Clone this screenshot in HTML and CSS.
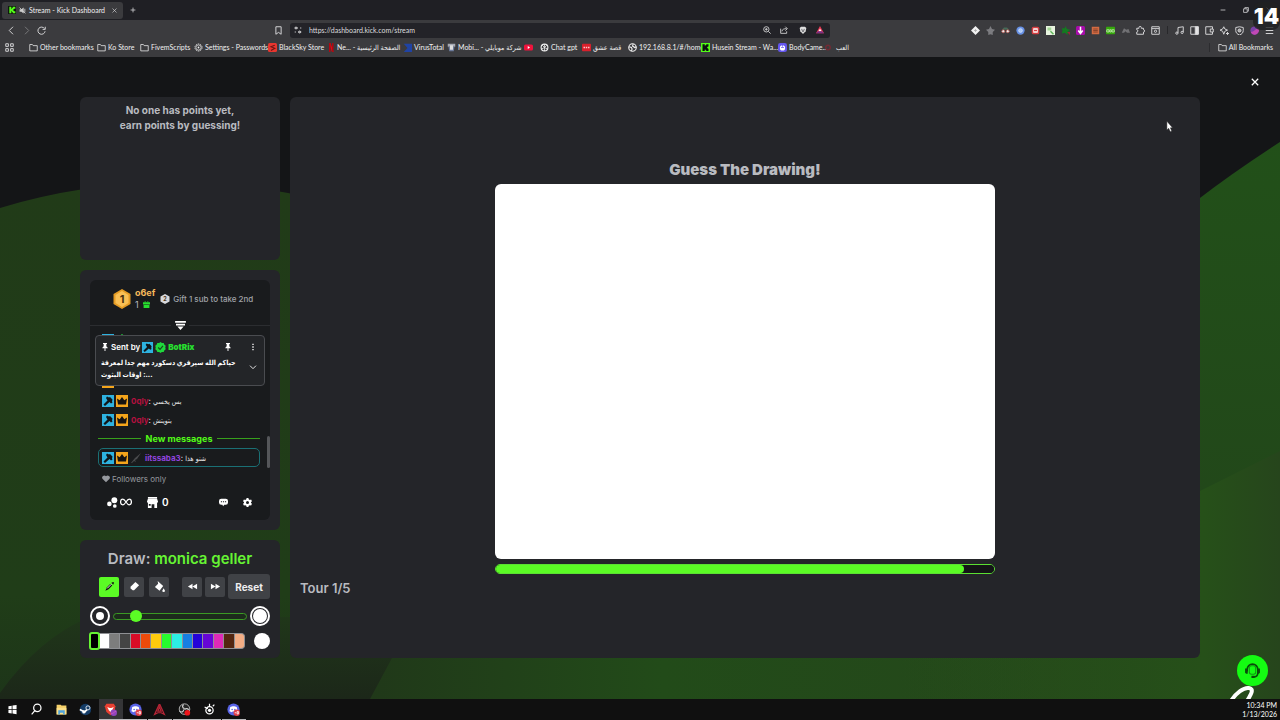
FILE: index.html
```html
<!DOCTYPE html>
<html lang="en">
<head>
    <meta charset="UTF-8">
    <title>Stream - Kick Dashboard</title>
    <link rel="stylesheet" href="styles.css">
</head>
<body>
    <svg class="sprite" aria-hidden="true">
        <symbol id="folder" viewBox="0 0 12 12"><path d="M1 10.500V2h3.500l1 1.500H11v7z" fill="none" stroke="currentColor"/></symbol>
        <symbol id="kick" viewBox="0 0 12 12"><path d="M0 0h12v12H0z" fill="#53fc18"/><path d="M2 1.500h3v2h1v-1h1v-1h3v3H9v1H8v1h1v1h1v3H7v-1H6v-1H5v2H2z" fill="#0b0e0f"/></symbol>
        <symbol id="kick-dark" viewBox="0 0 12 12"><path d="M0 0h12v12H0z" fill="#10160f"/><path d="M2 1h3v3h1V3h1V1h4v3H9v1H8v2h1v1h2v3H7V9H6V8H5v3H2z" fill="#53fc18"/></symbol>
        <symbol id="globe" viewBox="0 0 12 12"><circle cx="6" cy="6" r="5" fill="none" stroke="currentColor" stroke-width="1.500"/><path d="M1.500 5l3 1 1 2-1 2.500M7 1.500L6 4l3 2 2-1" fill="none" stroke="currentColor" stroke-width="1.500"/></symbol>
        <symbol id="knot" viewBox="0 0 12 12"><circle cx="6" cy="6" r="4.500" fill="none" stroke="currentColor" stroke-width="1.500"/><path d="M6 1.500v4.500l4 2M6 6l-4 2M3 3l3 3 3-3M6 6v4.500" fill="none" stroke="currentColor"/></symbol>
        <symbol id="gear" viewBox="0 0 12 12"><path fill-rule="evenodd" fill="currentColor" d="M4.800 0h2.400l.4 1.700 1.500.8L10.800 2 12 4.200 10.700 5.400v1.200L12 7.800 10.800 10l-1.700-.5-1.500.8L7.200 12H4.800l-.4-1.700-1.500-.8L1.200 10 0 7.800l1.300-1.200V5.400L0 4.200 1.200 2l1.700.5 1.500-.8zM6 4a2 2 0 100 4 2 2 0 000-4z"/></symbol>
        <symbol id="gear-line" viewBox="0 0 12 12"><circle cx="6" cy="6" r="4.800" fill="none" stroke="currentColor" stroke-dasharray="2 1"/><circle cx="6" cy="6" r="3.500" fill="none" stroke="currentColor"/><circle cx="6" cy="6" r="1.200" fill="currentColor"/></symbol>
        <symbol id="mod" viewBox="0 0 12 12"><path d="M0 0h12v12H0z" fill="#2eb2e0"/><path d="M5 1.500l2 1 1-.5 2.500 2.500-.5 2 .5 1-1.500 1L7.500 7 3 11 1.500 9.500 5.500 5.500 4 3z" fill="#101619"/></symbol>
        <symbol id="crown" viewBox="0 0 12 12"><path d="M0 0h12v12H0z" fill="#f5a51b"/><path d="M1 3.500l2.700 1.700L6 2l2.300 3.200L11 3.500l-1 6H2z" fill="#171412"/></symbol>
        <symbol id="verified" viewBox="0 0 12 12"><path d="M6 0l1.500 1.200 2-.2.600 1.800 1.600 1.200L11.200 6l.5 2-1.600 1.200-.6 1.800-2-.2L6 12l-1.500-1.200-2 .2-.6-1.800L.3 8 .800 6 .3 4l1.600-1.200L2.500 1l2 .2z" fill="#1fd83c"/><path d="M3.500 6l2 2 3.200-3.800" fill="none" stroke="#174a1d" stroke-width="1.300"/></symbol>
        <symbol id="pin" viewBox="0 0 12 12"><path d="M3 0h6v1.500H8v3.500l2 2v1H6.700v4H5.300V8H2V7l2-2V1.500H3z" fill="currentColor"/></symbol>
        <symbol id="discord" viewBox="0 0 16 16"><circle cx="8" cy="8" r="7.500" fill="#5964e8"/><path d="M4 5l3-1h2l3 1 1 5-3 1.500-.8-1H6.800l-.8 1L3 10z" fill="#fff"/><circle cx="6.300" cy="8" r="1" fill="#5964e8"/><circle cx="9.700" cy="8" r="1" fill="#5964e8"/><circle cx="12" cy="12" r="4" fill="#e2404b"/><path d="M9.500 12h2M12.500 10.500h1.500v3h-1.500z" stroke="#fff" fill="none"/></symbol>
    </svg>

    <header class="browser">
        <div class="tab-strip">
            <div class="tab">
                <svg class="icon"><use href="#kick-dark"/></svg>
                <svg class="icon-small" viewBox="0 0 12 12"><path d="M1 4h3l4-3v10L4 8H1z" fill="#ccc"/><path d="M1 1l10 10M10 3v6" stroke="#ccc" stroke-width="1.500"/></svg>
                <span>Stream - Kick Dashboard</span>
                <button class="tab-close" aria-label="Close tab"><svg viewBox="0 0 10 10"><path d="M1 1l8 8M9 1L1 9"/></svg></button>
            </div>
            <button class="new-tab" aria-label="New tab"><svg viewBox="0 0 10 10"><path d="M5 1v8M1 5h8"/></svg></button>
            <div class="window-buttons">
                <button aria-label="Minimize"><svg viewBox="0 0 10 10"><path d="M1 5h8"/></svg></button>
                <button aria-label="Restore"><svg viewBox="0 0 10 10"><path d="M1 3h6v6H1zM3 3V1h6v6H7"/></svg></button>
                <button aria-label="Close window"><svg viewBox="0 0 10 10"><path d="M1 1l8 8M9 1L1 9"/></svg></button>
            </div>
            <div class="fps">14</div>
        </div>

        <div class="toolbar">
            <div class="nav-buttons">
                <button aria-label="Back"><svg viewBox="0 0 12 12"><path d="M8 1L3 6l5 5"/></svg></button>
                <button class="disabled" aria-label="Forward"><svg viewBox="0 0 12 12"><path d="M4 1l5 5-5 5"/></svg></button>
                <button aria-label="Reload"><svg viewBox="0 0 12 12"><path d="M10 3.500A4.800 4.800 0 1010.800 7M11 1v3.500H7.500"/></svg></button>
            </div>
            <button class="save" aria-label="Bookmark this page"><svg viewBox="0 0 12 12"><path d="M2.500 1h7v10L6 8.500 2.500 11z"/></svg></button>
            <div class="address">
                <svg class="line-icon" viewBox="0 0 12 12"><path d="M1 3h5M9 3h2M1 9h2M6 9h5"/><circle cx="3" cy="3" r="1.500"/><circle cx="8.500" cy="9" r="1.500"/></svg>
                <input type="text" aria-label="Address" value="https://dashboard.kick.com/stream">
                <svg class="line-icon" viewBox="0 0 12 12"><circle cx="5" cy="5" r="4"/><path d="M8 8l3.500 3.500M5 3v4M3 5h4"/></svg>
                <svg class="line-icon share" viewBox="0 0 12 12"><path d="M1 4v7h9V8M3 8c0-3 3-4 7-4M8 1l3 3-3 3"/></svg>
                <svg class="icon" viewBox="0 0 12 12"><path d="M3 1h6l2 2-1 5-4 4-4-4-1-5z" fill="#ddd"/><path d="M3 4l2 1 1 2 1-2 2-1-2 5H5z" fill="#77777c"/></svg>
                <svg class="icon" viewBox="0 0 12 12"><path d="M6 0l6 11H0z" fill="#e93854"/><path d="M6 4l2.500 4h-5z" fill="#fff"/><path d="M0 11l3-3h6l3 3z" fill="#773087"/></svg>
            </div>
            <div class="extensions">
                <svg viewBox="0 0 12 12"><path d="M6 0l6 6-6 6-6-6z" fill="#f2f2f2"/><path d="M4 6h4M6 4v4" stroke="#aaa"/></svg>
                <svg viewBox="0 0 12 12"><path d="M6 0l2 4 4 1-3 3v4l-3-1-3 1V8L0 5l4-1z" fill="#7c7c80"/></svg>
                <svg viewBox="0 0 12 12"><path d="M1 5l3-3h4l3 3z" fill="#476957"/><circle cx="3" cy="7" r="2" fill="#eee" stroke="#b44f48"/><circle cx="9" cy="7" r="2" fill="#eee" stroke="#b44f48"/></svg>
                <svg viewBox="0 0 12 12"><circle cx="6" cy="6" r="5.500" fill="#6791e5"/><circle cx="6" cy="6" r="2.500" fill="#a9c8f6" stroke="#d4e2fa"/></svg>
                <svg viewBox="0 0 12 12"><rect x="1" y="1" width="10" height="10" rx="2" fill="#d63f42"/><path d="M3 3h6v6H3z" fill="#fff"/><path d="M4 5h4v2H4z" fill="#d63f42"/></svg>
                <svg viewBox="0 0 12 12"><path d="M0 0h12v12H0z" fill="#e8f4df"/><path d="M2 2h5v4H2z" fill="#a3d695"/><path d="M6 7l4 4" stroke="#5fb75b" stroke-width="2"/></svg>
                <svg viewBox="0 0 12 12"><path d="M6 0l2 4 4 1-3 3v4L5 9 1 10l1-4-1-3h4z" fill="#137a20"/><path d="M8 8h4v4z" fill="#93283a"/></svg>
                <svg viewBox="0 0 12 12"><rect width="12" height="12" rx="2" fill="#a80cab"/><path d="M6 1v8M3 6l3 4 3-4" fill="none" stroke="#fff" stroke-width="2"/></svg>
                <svg viewBox="0 0 12 12"><path d="M1 1h10v10H1z" fill="#d26b42"/><path d="M3 4h6M3 6h6M3 8h6" stroke="#713725"/></svg>
                <svg viewBox="0 0 12 12"><rect y="1" width="12" height="10" rx="1" fill="#36a80c"/><path d="M1 5h3v3H1zM5 5h2v3H5zM8 5h3v3H8z" fill="none" stroke="#d0eec1"/></svg>
                <svg viewBox="0 0 12 12"><path d="M1 9l3-6 3 2 3-1 2 5H8L6 7 4 9z" fill="#717174"/></svg>
                <svg class="line" viewBox="0 0 12 12"><path d="M1 3h3V2a1.500 1.500 0 013 0v1h3v2a1.500 1.500 0 010 3v3H1V8a1.500 1.500 0 000-3z"/></svg>
                <svg class="line" viewBox="0 0 12 12"><path d="M1 1h10v10H1zM1 3.500h10"/><circle cx="6" cy="7" r="1.500"/></svg>
                <i></i>
                <svg class="line" viewBox="0 0 12 12"><path d="M4 9V2l7-1v7"/><circle cx="2.500" cy="9.500" r="1.500"/><circle cx="9.500" cy="8.500" r="1.500"/></svg>
                <svg class="line" viewBox="0 0 12 12"><path d="M1 1h10v10H1z"/><path d="M7 1h4v10H7z" fill="#e6e6e6"/></svg>
                <svg class="line" viewBox="0 0 12 12"><path d="M10 4V1H1v10h9V8M7 4h4v4H7z"/></svg>
                <svg class="line" viewBox="0 0 12 12"><path d="M5 1l1.500 3L10 5.500 6.500 7 5 11 3.500 7 0 5.500 3.500 4zM10 8v4M8 10h4"/></svg>
                <svg class="line" viewBox="0 0 12 12"><path d="M6 1l5 1v4c0 3-2 5-5 6-3-1-5-3-5-6V2z"/><circle cx="6" cy="6" r="2" fill="#aaa"/></svg>
                <svg viewBox="0 0 12 12"><circle cx="6" cy="6" r="5.500" fill="#7941a8"/><path d="M1 8c5 0 5-4 10-5a5.500 5.500 0 01-5 8.500A5.500 5.500 0 011 8z" fill="#c149b5"/></svg>
                <svg class="line" viewBox="0 0 12 12"><path d="M1 2h10M1 6h10M1 10h10"/></svg>
            </div>
        </div>

        <div class="bookmarks-bar">
            <button class="apps" aria-label="Apps"><svg viewBox="0 0 12 12"><path d="M1 1h3.500v3.500H1zM7.500 1H11v3.500H7.500zM1 7.500h3.500V11H1zM7.500 7.500H11V11H7.500z"/></svg></button>
            <nav class="bookmarks">
                <a href="#"><svg><use href="#folder"/></svg>Other bookmarks</a>
                <a href="#"><svg><use href="#folder"/></svg>Ko Store</a>
                <a href="#"><svg><use href="#folder"/></svg>FivemScripts</a>
                <a href="#"><svg><use href="#gear-line"/></svg>Settings - Passwords</a>
                <a href="#"><svg viewBox="0 0 12 12"><rect width="12" height="12" rx="2" fill="#e8362f"/><path d="M9 3L4 5l5 2-5 3" fill="none" stroke="#6b1715" stroke-width="1.500"/></svg>BlackSky Store</a>
                <a href="#"><svg viewBox="0 0 12 12"><path d="M4 0h2l4 12H8z" fill="#e50914"/><path d="M4 0h2v12H4zM8 0h2v12H8z" fill="#b20710"/></svg>Ne... - الصفحة الرئيسية</a>
                <a href="#"><svg viewBox="0 0 12 12"><path d="M1 1h11v11H1l5-5.500z" fill="#2043a4"/></svg>VirusTotal</a>
                <a href="#"><svg viewBox="0 0 12 12"><path d="M1 1h10v4H1z" fill="#a5a8b2"/><path d="M2 5h8l-1 6H3z" fill="#6c7a9a"/><path d="M4 3h4v6H4z" fill="#ddd"/></svg>Mobi... - شركة موبايلي</a>
                <a href="#" aria-label="YouTube"><svg viewBox="0 0 12 12"><rect y="2" width="12" height="8" rx="2" fill="#f0133c"/><path d="M5 4l3 2-3 2z" fill="#fff"/></svg></a>
                <a href="#"><svg><use href="#knot"/></svg>Chat gpt</a>
                <a href="#"><svg viewBox="0 0 12 12"><rect y="1" width="12" height="10" rx="1" fill="#d8202c"/><path d="M2 6h8" stroke="#ffc7c9" stroke-width="2" stroke-dasharray="2 1"/></svg>قصة عشق</a>
                <a href="#"><svg><use href="#globe"/></svg>192.168.8.1/#/home</a>
                <a href="#"><svg><use href="#kick"/></svg>Husein Stream - Wa...</a>
                <a href="#"><svg viewBox="0 0 12 12"><rect width="12" height="12" rx="3" fill="#6456ee"/><circle cx="6" cy="6.500" r="3.500" fill="#fff"/><path d="M4 6h4M6 2v3" stroke="#6456ee"/></svg>BodyCame...</a>
                <a href="#"><svg viewBox="0 0 12 12"><circle cx="4" cy="6" r="3" fill="none" stroke="#702c35" stroke-width="2"/></svg>العب</a>
            </nav>
            <a class="all-bookmarks" href="#"><svg><use href="#folder"/></svg>All Bookmarks</a>
        </div>
    </header>

    <main class="game">
        <svg class="hills" viewBox="0 0 1280 642" preserveAspectRatio="none" aria-hidden="true">
            <defs>
                <linearGradient id="hillLeft" x1="0" y1="0" x2="0" y2="1"><stop offset="0" stop-color="#213b18"/><stop offset=".8" stop-color="#203d18"/><stop offset="1" stop-color="#1d3519"/></linearGradient>
                <linearGradient id="hillBottom" x1="0" y1="0" x2="1" y2="0"><stop offset="0" stop-color="#203719"/><stop offset=".4" stop-color="#224b19"/><stop offset="1" stop-color="#25471b"/></linearGradient>
                <linearGradient id="hillRight" x1="0" y1="0" x2="0" y2="1"><stop offset="0" stop-color="#225019"/><stop offset="1" stop-color="#22431a"/></linearGradient>
                <linearGradient id="shade" x1="0" y1="0" x2="0" y2="1"><stop offset="0" stop-color="#20371a"/><stop offset="1" stop-color="#1c2719"/></linearGradient>
                <linearGradient id="slope" x1="0" y1="0" x2="1" y2="0"><stop offset="0" stop-color="#265019" stop-opacity="0"/><stop offset=".8" stop-color="#265019"/><stop offset="1" stop-color="#26451c"/></linearGradient>
            </defs>
            <path d="M0 151Q90 124 180 126T320 144V642H0z" fill="url(#hillLeft)"/>
            <path d="M1130 200Q1190 143 1280 85V642H1130z" fill="url(#hillRight)"/>
            <path d="M350 642V560H1130V642z" fill="url(#hillBottom)"/>
            <path d="M900 642V590L1200 434L1280 394V642z" fill="url(#slope)"/>
            <path d="M0 636Q40 580 90 560H414L370 642H0z" fill="url(#shade)"/>
        </svg>

        <aside class="sidebar">
            <section class="panel scores">
                <p>No one has points yet,<br>earn points by guessing!</p>
            </section>

            <section class="panel chat-panel">
                <div class="chat">
                    <div class="leaders">
                        <svg class="medal" viewBox="0 0 20 20"><path d="M10 0l8.500 5v10L10 20l-8.500-5V5z" fill="#e59c24"/><path d="M10 2l6.500 4v8L10 18l-6.500-4V6z" fill="#f9c055"/><text x="10" y="14" text-anchor="middle">1</text></svg>
                        <div class="leader">
                            <strong>o6ef</strong>
                            <span>1 <svg viewBox="0 0 12 12"><path d="M0 2h12v4H0zM1 7h10v5H1z" fill="#27e02f"/><path d="M3 0l3 2 3-2v2H3z" fill="#27e02f"/></svg></span>
                        </div>
                        <svg class="second" viewBox="0 0 20 20"><path d="M10 0l9 5v10l-9 5-9-5V5z" fill="#d7d9dc"/><text x="10" y="14" text-anchor="middle">2</text></svg>
                        <span class="gift">Gift 1 sub to take 2nd</span>
                        <button class="expand" aria-label="Expand leaderboard"><svg viewBox="0 0 12 10"><path d="M0 0h12v2H0zM1 3h10v2H1zM2.500 6h7L6 10z"/></svg></button>
                    </div>

                    <div class="messages">
                        <div class="message"><svg><use href="#mod"/></svg><svg><use href="#verified"/></svg><span><b class="bot">BotRix</b>: <bdi>ارحبوا جميعا</bdi></span></div>
                        <div class="message spacer"><svg><use href="#crown"/></svg></div>
                        <div class="message"><svg><use href="#mod"/></svg><svg><use href="#crown"/></svg><span><b class="red">0qly</b>: <bdi>بس يخسي</bdi></span></div>
                        <div class="message"><svg><use href="#mod"/></svg><svg><use href="#crown"/></svg><span><b class="red">0qly</b>: <bdi>بتويتش</bdi></span></div>
                        <div class="new-messages">New messages</div>
                        <div class="message highlighted"><svg><use href="#mod"/></svg><svg><use href="#crown"/></svg><svg viewBox="0 0 12 12"><path d="M1 11l4-5 6-5-4 6-2 1 1 2-2-1-2 2z" fill="#4a4b4d"/></svg><span><b class="purple">iitssaba3</b>: <bdi>شنو هذا</bdi></span></div>

                        <div class="pinned">
                            <div class="pinned-head">
                                <svg><use href="#pin"/></svg>
                                <span>Sent by</span>
                                <svg class="badge"><use href="#mod"/></svg>
                                <svg class="badge"><use href="#verified"/></svg>
                                <b class="bot">BotRix</b>
                                <button class="unpin" aria-label="Unpin"><svg><use href="#pin"/></svg></button>
                                <button aria-label="More"><svg viewBox="0 0 12 12"><path d="M5 1h2v2H5zM5 5h2v2H5zM5 9h2v2H5z" fill="currentColor"/></svg></button>
                            </div>
                            <div class="pinned-body">
                                <p>حياكم الله سيرفري دسكورد مهم جدا لمعرفة<br>اوقات البثوث <bdo dir="ltr">:...</bdo></p>
                                <button aria-label="Show all"><svg viewBox="0 0 12 12"><path d="M1.500 4L6 8.500 10.500 4" fill="none" stroke="currentColor" stroke-width="1.300"/></svg></button>
                            </div>
                        </div>
                    </div>

                    <div class="followers"><svg viewBox="0 0 12 12"><path d="M6 11L1 6a3 3 0 015-4 3 3 0 015 4z" fill="currentColor"/></svg>Followers only</div>
                    <div class="chat-actions">
                        <svg viewBox="0 0 12 12"><circle cx="8" cy="3.500" r="3.200"/><circle cx="2.600" cy="7.500" r="2.500"/><circle cx="8.500" cy="9.800" r="2"/></svg>
                        <span class="infinity"><svg viewBox="0 0 14 10"><path d="M7 5C5 2 4 1.500 3 1.500a2.800 3.500 0 000 7C4 8.500 5 8 7 5s3-3.500 4-3.500a2.800 3.500 0 010 7C10 8.500 9 8 7 5z"/></svg></span>
                        <svg viewBox="0 0 12 12"><path d="M1 0h10v1.500H1zM1 2h10l1 3v1h-1v6H8V8H5v4H1V6H0V5zM2 7.500v2h2v-2z" fill-rule="evenodd"/></svg>
                        <span class="points">0</span>
                        <button aria-label="Chat"><svg viewBox="0 0 12 12"><path fill-rule="evenodd" d="M3 1h6a3 3 0 013 3v2a3 3 0 01-3 3H7l-1.500 2L4.500 9H3a3 3 0 01-3-3V4a3 3 0 013-3zM2.500 4.300v1.400H4V4.300zm2.700 0v1.400h1.600V4.300zm2.800 0v1.400h1.500V4.300z"/></svg></button>
                        <button aria-label="Chat settings"><svg><use href="#gear"/></svg></button>
                    </div>
                </div>
            </section>

            <section class="panel draw">
                <h2>Draw: <span>monica geller</span></h2>
                <div class="tools">
                    <button class="tool active" aria-label="Pencil"><svg viewBox="0 0 12 12"><path d="M1.500 10.500L3 7l4-4 2 2-4 4z" fill="#111"/><path d="M8 2l2-1 1 1-1 2z" fill="#111"/><path d="M3.500 8L8 3.500" stroke="#fff"/></svg></button>
                    <button class="tool" aria-label="Eraser"><svg viewBox="0 0 12 12"><path d="M2 6l5-5 4 3.500L5.500 10H4L1.500 8z"/></svg></button>
                    <button class="tool fill" aria-label="Fill"><svg viewBox="0 0 12 12"><path d="M4 0l6 5.500-4 5L1 6.500 4.500 3zM10.500 8L12 10.500a1.500 1.500 0 01-3 0z"/></svg></button>
                    <button class="tool" aria-label="Undo"><svg viewBox="0 0 12 12"><path d="M6 3v6L1 6zM11 3v6L6 6z"/></svg></button>
                    <button class="tool" aria-label="Redo"><svg viewBox="0 0 12 12"><path d="M1 3v6l5-3zM6 3v6l5-3z"/></svg></button>
                    <button class="reset">Reset</button>
                </div>
                <div class="brush">
                    <span class="size small"></span>
                    <input type="range" aria-label="Brush size" min="0" max="100" value="13">
                    <span class="size"></span>
                </div>
                <div class="colors">
                    <div class="palette">
                        <button class="black" aria-label="Black"></button>
                        <button class="white" aria-label="White"></button>
                        <button class="gray" aria-label="Gray"></button>
                        <button class="dark-gray" aria-label="Dark gray"></button>
                        <button class="crimson" aria-label="Red"></button>
                        <button class="orange" aria-label="Orange"></button>
                        <button class="yellow" aria-label="Yellow"></button>
                        <button class="green" aria-label="Green"></button>
                        <button class="cyan" aria-label="Cyan"></button>
                        <button class="blue" aria-label="Blue"></button>
                        <button class="navy" aria-label="Dark blue"></button>
                        <button class="violet" aria-label="Violet"></button>
                        <button class="pink" aria-label="Pink"></button>
                        <button class="brown" aria-label="Brown"></button>
                        <button class="peach" aria-label="Peach"></button>
                    </div>
                    <button class="picker" aria-label="Custom color"></button>
                </div>
            </section>
        </aside>

        <section class="panel board">
            <h1>Guess The Drawing!</h1>
            <canvas width="500" height="375"></canvas>
            <progress value="94" max="100" aria-label="Time left"></progress>
            <div class="tour">Tour 1/5</div>
        </section>

        <button class="close-game" aria-label="Close"><svg viewBox="0 0 10 10"><path d="M1 1l8 8M9 1L1 9"/></svg></button>
        <svg class="cursor" viewBox="0 0 8 12"><path d="M1 0v10l2-2 2 4 1.500-1L5 7.500h2.500z" fill="#fff" stroke="#222" stroke-width=".5"/></svg>
        <svg class="doodle" viewBox="0 0 26 14"><path d="M2 16C7 8 15 2 20 3c6 1 1 8-2 13" fill="none" stroke="#fff" stroke-width="4"/></svg>
        <button class="support" aria-label="Support"><svg viewBox="0 0 16 16"><path d="M3 9V7a5 5 0 0110 0v3c0 3-2 4-4 4" fill="none" stroke="#0a4a0a" stroke-width="1.500"/><path d="M1 6h2.500v5H2L1 10zM12.500 6H15v4l-1 1h-1.500zM7 13h3v2H7z" fill="#0a4a0a"/><rect x="5" y="3.500" width="6" height="8" rx="2" fill="none" stroke="#0c9a10"/></svg></button>
    </main>

    <footer class="taskbar">
        <nav>
            <button aria-label="Start"><svg viewBox="0 0 16 16"><path d="M3 4l4-.6v4.300H3zM8 3.200L13 2.500v5.200H8zM3 8.500h4v4.300L3 12.200zM8 8.500h5v5.200L8 13z" fill="#fff"/></svg></button>
            <button aria-label="Search"><svg viewBox="0 0 16 16"><circle cx="9" cy="6" r="4.500" fill="none" stroke="#fff" stroke-width="1.500"/><path d="M6 9.500L2 14" stroke="#fff" stroke-width="1.500"/></svg></button>
            <button aria-label="Files"><svg viewBox="0 0 16 16"><path d="M2 2h5l1 1h6v11H2z" fill="#f4cf68"/><path d="M2 6h12v8H2z" fill="#fbe08a"/><path d="M4 9h8v5h-2v-2H6v2H4z" fill="#4fa3dd"/></svg></button>
            <button aria-label="Steam"><svg viewBox="0 0 16 16"><circle cx="8" cy="8" r="7" fill="#143c66"/><path d="M1 8l6 3 4-4" stroke="#fff" stroke-width="2" fill="none"/><circle cx="11" cy="6" r="2.500" fill="#143c66" stroke="#fff"/><circle cx="6" cy="11" r="2" fill="#fff"/></svg></button>
            <button class="open current" aria-label="Brave"><svg viewBox="0 0 16 16"><path d="M3 1h9l2 3-1 7-5 4-5-4-2-7z" fill="#ea4032"/><path d="M4 5l3 1h2l3-1-2 4-2 2-2-2z" fill="#fff"/><circle cx="12" cy="12" r="4" fill="#9045be"/><path d="M9 13c3 0 3-2 6-3" stroke="#d55ac2" fill="none"/></svg></button>
            <button class="open" aria-label="Discord"><svg><use href="#discord"/></svg></button>
            <button class="open" aria-label="Launcher"><svg viewBox="0 0 16 16"><path d="M2 14L7.500 2h1L14 14l-4-2H6zM8 5l-2 5h4z" fill="none" stroke="#b72536" stroke-width="1.500"/></svg></button>
            <button class="open" aria-label="OBS"><svg viewBox="0 0 16 16"><circle cx="8" cy="7.500" r="6.500" fill="#222" stroke="#ccc"/><path d="M8 7c-3-1-3-4-1-5M8 8c2-2 5-1 5 1M7 8c0 3-3 4-5 2" stroke="#ccc" stroke-width="1.500" fill="none"/><circle cx="11.500" cy="12" r="3.500" fill="#ee151b"/></svg></button>
            <button class="open" aria-label="SteelSeries"><svg viewBox="0 0 16 16"><circle cx="8" cy="9" r="4.500" fill="none" stroke="#fff" stroke-width="1.500"/><circle cx="8" cy="9" r="2" fill="#fff"/><path d="M2 5l4 2M8 1v4M12 4l2-2" stroke="#fff" stroke-width="1.500"/></svg></button>
            <button class="open" aria-label="Discord"><svg><use href="#discord"/></svg></button>
        </nav>
        <div class="clock">10:34 PM<br>1/13/2026</div>
    </footer>
</body>
</html>
```

FILE: styles.css
```css
* {
    box-sizing: border-box;
}
body {
    margin: 0;
    min-height: 100vh;
    display: flex;
    flex-direction: column;
    background: #141517;
    color: #fff;
    font-family: Inter, "DejaVu Sans Condensed", "DejaVu Sans", sans-serif;
}
h1, h2, p {
    margin: 0;
}
button {
    display: flex;
    align-items: center;
    justify-content: center;
    padding: 0;
    border: none;
    background: none;
    color: inherit;
    font-family: inherit;
    cursor: pointer;
}
svg {
    display: block;
    flex-shrink: 0;
}
.sprite {
    position: absolute;
    width: 0;
    height: 0;
}

/* browser */
.browser {
    background: #3b3b3e;
    font-family: Lato, "DejaVu Sans Condensed", "DejaVu Sans", sans-serif;
    font-size: 7px;
    color: #f0f0f0;
}
.browser button svg, .line-icon, .extensions .line {
    fill: none;
    stroke: #d5d5d7;
    stroke-width: 1.3;
}
.tab-strip {
    position: relative;
    display: flex;
    align-items: center;
    height: 20px;
    background: #1f1f24;
}
.tab {
    display: flex;
    align-items: center;
    gap: 3px;
    width: 121px;
    height: 17px;
    margin-left: 2px;
    padding: 0 6px;
    border-radius: 3px;
    background: #3b3b3e;
    white-space: nowrap;
}
.icon {
    width: 8px;
    height: 8px;
}
.icon-small {
    width: 7px;
    height: 7px;
}
.tab-close {
    margin-left: auto;
}
.tab-close svg {
    width: 5px;
    height: 5px;
}
.new-tab {
    width: 20px;
}
.new-tab svg {
    width: 6px;
    height: 6px;
}
.window-buttons {
    display: flex;
    margin-left: auto;
}
.window-buttons button {
    width: 23px;
}
.window-buttons svg {
    width: 6px;
    height: 6px;
}
.fps {
    position: absolute;
    top: 2px;
    right: 0;
    z-index: 1;
    width: 27px;
    border-radius: 8px;
    background: #202022cc;
    color: #fff;
    font-family: Inter, sans-serif;
    font-size: 22px;
    font-weight: 900;
    line-height: 28px;
    text-align: center;
}
.toolbar {
    display: flex;
    align-items: center;
    height: 20px;
}
.nav-buttons {
    display: flex;
    width: 270px;
    padding-left: 4px;
}
.nav-buttons button {
    width: 15px;
}
.nav-buttons svg, .save svg {
    width: 9px;
    height: 9px;
}
.nav-buttons .disabled {
    opacity: .4;
}
.save {
    width: 17px;
}
.address {
    display: flex;
    align-items: center;
    flex: 1;
    gap: 9px;
    height: 15px;
    margin: 0 141px 0 3px;
    padding: 0 6px 0 4px;
    border-radius: 3px;
    background: #232328;
}
.address input {
    flex: 1;
    min-width: 0;
    padding: 0;
    margin-left: -2px;
    border: none;
    background: none;
    color: #dcdcde;
    font-family: inherit;
    font-size: 7px;
}
.line-icon {
    width: 8px;
    height: 8px;
}
.share {
    margin-right: 2px;
}
.extensions {
    display: flex;
    align-items: center;
    gap: 6px;
    padding-right: 6px;
}
.extensions svg {
    width: 9px;
    height: 9px;
}
.extensions i {
    width: 1px;
    height: 8px;
    margin: 0 1px;
    background: #28282b;
}
.bookmarks-bar {
    display: flex;
    align-items: center;
    height: 17px;
    padding: 0 7px 3px 5px;
}
.apps {
    width: 24px;
    justify-content: flex-start;
}
.bookmarks-bar svg {
    width: 9px;
    height: 9px;
}
.bookmarks {
    display: grid;
    grid-template-columns: 68px 43px 54px 74px 58px 77px 44px 77px 16px 42px 46px 73px 77px 47px auto;
}
.bookmarks-bar a {
    display: flex;
    align-items: center;
    gap: 2px;
    color: inherit;
    text-decoration: none;
    white-space: nowrap;
}
.bookmarks-bar .all-bookmarks {
    margin-left: auto;
    padding-left: 8px;
    border-left: 1px solid #2c2c2f;
}

/* game */
.game {
    position: relative;
    flex: 1;
    display: flex;
    gap: 10px;
    padding: 40px 80px 41px;
    overflow: hidden;
}
.hills {
    position: absolute;
    top: 0;
    left: 0;
    width: 100%;
    height: 100%;
}
.panel {
    position: relative;
    border-radius: 6px;
    background: #242529;
    color: #b9bbc0;
}
.sidebar {
    display: flex;
    flex-direction: column;
    gap: 10px;
    width: 200px;
    flex-shrink: 0;
}
.scores {
    flex: 1;
    min-height: 160px;
    padding-top: 6px;
    font-size: 10px;
    font-weight: 700;
    line-height: 15px;
    text-align: center;
}
.chat-panel {
    padding: 10px;
}
.chat {
    display: flex;
    flex-direction: column;
    height: 240px;
    border-radius: 6px;
    background: #191b1d;
    font-size: 8px;
}
.leaders {
    position: relative;
    display: flex;
    align-items: center;
    gap: 3px;
    height: 46px;
    padding: 0 22px 8px;
    border-bottom: 1px solid #2b2d30;
    white-space: nowrap;
}
.leaders text {
    fill: #4c3310;
    font-size: 11px;
    font-weight: 700;
}
.medal {
    width: 20px;
    height: 20px;
}
.leader {
    margin-right: 2px;
    font-size: 9px;
    line-height: 12px;
}
.leader strong {
    display: block;
    color: #f5b95c;
}
.leader span {
    display: flex;
    align-items: center;
    gap: 4px;
}
.leader svg {
    width: 7px;
    height: 7px;
}
.second {
    width: 10px;
    height: 10px;
}
.gift {
    font-weight: 500;
    color: #a0a3a8;
}
.expand {
    position: absolute;
    left: 50%;
    bottom: -6px;
    width: 18px;
    height: 12px;
    margin-left: -9px;
    background: #191b1d;
}
.expand svg {
    width: 11px;
    height: 9px;
    fill: #fff;
}
.messages {
    position: relative;
    height: 143px;
    padding: 4px 10px 0 8px;
}
.messages::after {
    content: "";
    position: absolute;
    right: 0;
    bottom: 1px;
    width: 3px;
    height: 32px;
    border-radius: 2px;
    background: #55575a;
}
.message {
    display: flex;
    align-items: center;
    gap: 2px;
    height: 19px;
    padding-left: 4px;
    color: #eee;
}
.message svg, .badge {
    width: 12px;
    height: 12px;
}
.message span {
    margin-left: 1px;
    white-space: nowrap;
}
.message bdi {
    font-size: 7px;
}
.message.spacer {
    margin-top: 23px;
}
.message .red {
    color: #b5103f;
}
.message .purple {
    color: #9043df;
}
.message.highlighted {
    padding-left: 3px;
    border: 1px solid #1a7075;
    border-radius: 5px;
}
.message .bot, .bot {
    color: #27e02f;
}
.new-messages {
    display: flex;
    align-items: center;
    gap: 5px;
    height: 19px;
    color: #53fc18;
    font-size: 9px;
    font-weight: 700;
    white-space: nowrap;
}
.new-messages::before, .new-messages::after {
    content: "";
    flex: 1;
    height: 1px;
    background: #37a01c;
}
.pinned {
    position: absolute;
    top: 9px;
    left: 5px;
    right: 5px;
    height: 51px;
    padding: 5px 7px;
    border: 1px solid #4a4c50;
    border-radius: 4px;
    background: #232528;
    color: #fff;
    font-weight: 600;
}
.pinned-head {
    display: flex;
    align-items: center;
    gap: 2px;
    height: 12px;
    margin-left: -2px;
}
.pinned svg {
    width: 8px;
    height: 8px;
}
.pinned .badge {
    width: 11px;
    height: 11px;
}
.unpin {
    margin-left: auto;
    margin-right: 15px;
}
.pinned-body {
    display: flex;
    align-items: center;
    justify-content: space-between;
    margin-left: -2px;
}
.pinned-body p {
    padding-top: 4px;
    font-size: 7px;
    font-weight: 700;
    line-height: 12px;
    white-space: nowrap;
}
.followers {
    display: flex;
    align-items: center;
    gap: 2px;
    height: 20px;
    padding-left: 12px;
    color: #96999e;
}
.followers svg {
    width: 8px;
    height: 8px;
}
.chat-actions {
    display: flex;
    align-items: center;
    height: 26px;
    padding: 0 18px 0 17px;
    color: #fff;
    font-size: 10px;
    font-weight: 600;
}
.chat-actions svg {
    width: 11px;
    height: 11px;
    fill: #fff;
}
.chat-actions .infinity svg {
    width: 12px;
    height: 8px;
    margin: 0 15px 0 2px;
    fill: none;
    stroke: #fff;
    stroke-width: 1.6;
}
.points {
    margin: 0 auto 0 4px;
}
.chat-actions button {
    margin-left: 15px;
}
.chat-actions button svg {
    width: 9px;
    height: 9px;
}

/* drawing tools */
.draw {
    padding: 9px 10px;
}
.draw h2 {
    margin-bottom: 5px;
    font-size: 15px;
    font-weight: 600;
    line-height: 20px;
    text-align: center;
    white-space: nowrap;
}
.draw h2 span {
    color: #66f433;
}
.tools {
    display: flex;
    align-items: center;
    justify-content: flex-end;
    gap: 3px;
    height: 25px;
}
.tool {
    width: 20px;
    height: 20px;
    border-radius: 2px;
    background: #404246;
}
.tool svg {
    width: 11px;
    height: 11px;
    fill: #fff;
}
.tool:nth-child(2), .tool:nth-child(3) {
    margin-left: 2px;
}
.tool.fill {
    margin-right: 10px;
}
.tool.active {
    background: #5bfb25;
}
.reset {
    width: 42px;
    height: 25px;
    border-radius: 3px;
    background: #404246;
    color: #eee;
    font-size: 10px;
    font-weight: 700;
}
.brush {
    display: flex;
    align-items: center;
    gap: 3px;
    margin-top: 7px;
}
.size {
    width: 20px;
    height: 20px;
    flex-shrink: 0;
    padding: 1px;
    border: 2px solid #fff;
    border-radius: 50%;
    background: #fff;
    background-clip: content-box;
}
.size.small {
    padding: 4px;
}
.brush input {
    flex: 1;
    min-width: 0;
    height: 14px;
    margin: 0;
    background: none;
    appearance: none;
}
.brush input::-webkit-slider-runnable-track {
    height: 7px;
    border: 1px solid #3b9a24;
    border-radius: 4px;
    background: #1d2b1c;
}
.brush input::-webkit-slider-thumb {
    width: 12px;
    height: 12px;
    margin-top: -4px;
    border-radius: 50%;
    background: #5bfb25;
    appearance: none;
}
.colors {
    display: flex;
    align-items: center;
    justify-content: space-between;
    margin-top: 7px;
}
.palette {
    display: flex;
    width: 155px;
    height: 16px;
}
.palette button {
    flex: 1;
    border: 1px solid #8f9094;
    border-width: 1px 1px 1px 0;
}
.palette .black {
    background: #000;
    outline: 2px solid #66f433;
    outline-offset: -1px;
    border: none;
    border-radius: 2px;
    z-index: 1;
}
.palette .white { background: #fff; }
.palette .gray { background: #7d7d7d; }
.palette .dark-gray { background: #444; }
.palette .crimson { background: #d80c27; }
.palette .orange { background: #ed4a0b; }
.palette .yellow { background: #ffcb0e; }
.palette .green { background: #27fb2e; }
.palette .cyan { background: #2cefe5; }
.palette .blue { background: #177fe2; }
.palette .navy { background: #2503d9; }
.palette .violet { background: #6706d5; }
.palette .pink { background: #df2bb7; }
.palette .brown { background: #542610; }
.palette .peach {
    background: #f3ad85;
    border-radius: 0 4px 4px 0;
}
.picker {
    width: 16px;
    height: 16px;
    border-radius: 50%;
    background: #fff;
}

/* board */
.board {
    flex: 1;
    display: flex;
    flex-direction: column;
    align-items: center;
    padding: 63px 10px 20px;
}
.board h1 {
    margin-bottom: 4px;
    font-size: 15px;
    font-weight: 900;
    line-height: 20px;
}
.board canvas {
    width: 100%;
    max-width: 500px;
    border-radius: 6px;
    background: #fff;
}
.board progress {
    width: 100%;
    max-width: 500px;
    height: 10px;
    margin-top: 5px;
    border: 1px solid #5be032;
    border-radius: 5px;
    background: #141517;
    overflow: hidden;
    appearance: none;
}
.board progress::-webkit-progress-bar {
    background: #141517;
}
.board progress::-webkit-progress-value {
    border-radius: 0 4px 4px 0;
    background: #5bfb25;
}
.tour {
    align-self: flex-start;
    margin-top: 4px;
    font-size: 13px;
    font-weight: 600;
    line-height: 20px;
}
.close-game {
    position: absolute;
    top: 20px;
    right: 20px;
    width: 10px;
    height: 10px;
}
.close-game svg {
    width: 8px;
    height: 8px;
    stroke: #fff;
    stroke-width: 1.6;
}
.cursor {
    position: absolute;
    top: 64px;
    right: 107px;
    width: 7px;
    height: 11px;
}
.support {
    position: absolute;
    right: 12px;
    bottom: 13px;
    width: 31px;
    height: 31px;
    border-radius: 50%;
    background: #14fb12;
}
.support svg {
    width: 17px;
    height: 17px;
}
.doodle {
    position: absolute;
    right: 25px;
    bottom: 0;
    width: 26px;
    height: 14px;
}

/* taskbar */
.taskbar {
    display: flex;
    justify-content: space-between;
    height: 21px;
    background: #101010;
}
.taskbar nav {
    display: flex;
    justify-content: space-between;
    width: 246px;
}
.taskbar button {
    width: 24px;
    border-bottom: 1px solid transparent;
}
.taskbar svg {
    width: 13px;
    height: 13px;
}
.taskbar .open {
    border-bottom: 1px solid #b9b9bb;
}
.taskbar .current {
    background: #353537;
}
.clock {
    padding: 2px 3px 0 0;
    font-family: Lato, sans-serif;
    font-size: 7px;
    line-height: 9px;
    text-align: right;
}
```
